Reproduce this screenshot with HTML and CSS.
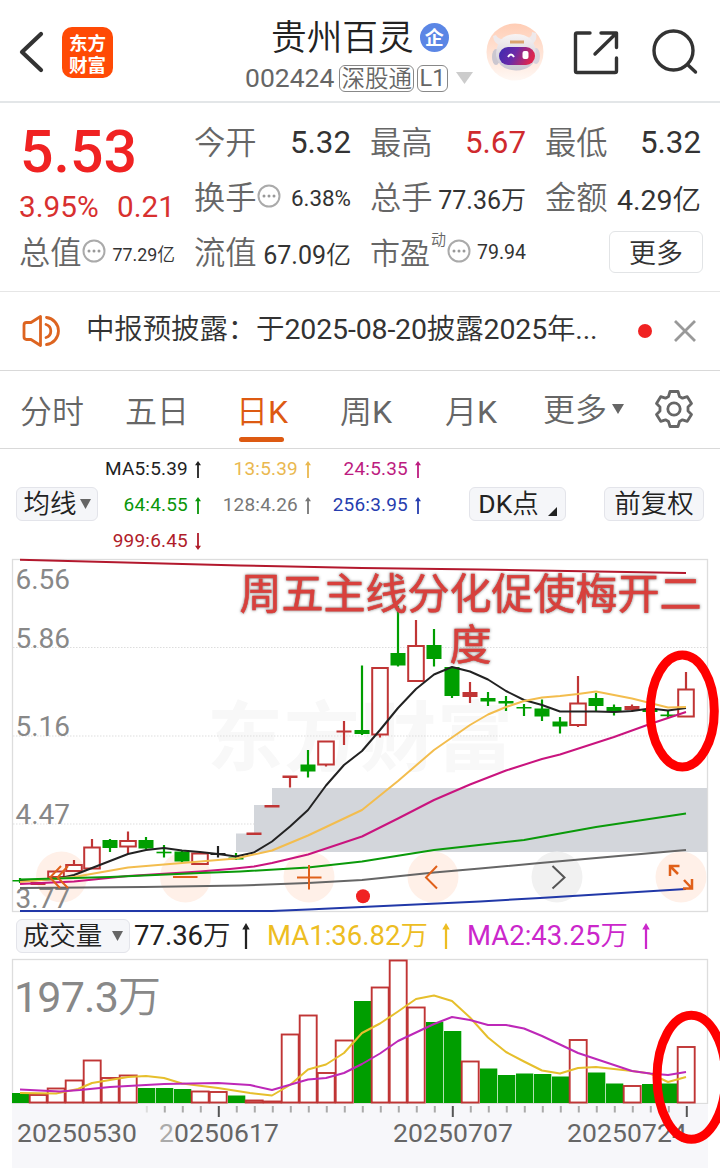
FILE: index.html
```
<!DOCTYPE html>
<html lang="zh-CN">
<head>
<meta charset="utf-8">
<title>贵州百灵 002424</title>
<link rel="stylesheet" href="styles.css">
</head>
<body>
<header class="header">
  <svg class="back" width="26" height="42" viewBox="0 0 26 42"><path d="M23 3 4 21 23 39" fill="none" stroke="#333" stroke-width="4.2" stroke-linecap="round" stroke-linejoin="round"/></svg>
  <div class="logo"><span>东方</span><span>财富</span></div>
  <div class="stock">
    <div class="name"><span>贵州百灵</span><b class="corp">企</b></div>
    <div class="code"><span>002424</span><i class="tag tag-market">深股通</i><i class="tag tag-level">L1</i><svg class="drop" width="17" height="12"><path d="M0 0H17L8.5 12Z" fill="#ccc"/></svg></div>
  </div>
  <svg class="robot" width="58" height="58" viewBox="0 0 58 58">
    <defs>
      <linearGradient id="halo" x2="0" y2="1"><stop stop-color="#ffcdb5"/><stop offset="1" stop-color="#fff8f4"/></linearGradient>
      <linearGradient id="visor" x2="1" y2=".25"><stop stop-color="#3b2bb0"/><stop offset=".5" stop-color="#6b2aa8"/><stop offset="1" stop-color="#dc2650"/></linearGradient>
      <linearGradient id="shell" x2="0" y2="1"><stop stop-color="#f8f4f4"/><stop offset="1" stop-color="#c9c6d2"/></linearGradient>
    </defs>
    <circle cx="29" cy="29" r="28.5" fill="url(#halo)"/>
    <path d="M7 13Q8 21 14 22L20 16Q12 17 10 12ZM50 10Q52 18 45 22L37 14Q46 17 46 9Z" fill="#eee9eb"/>
    <ellipse cx="10" cy="34" rx="4" ry="8" fill="#cbc7d0"/><ellipse cx="50" cy="33" rx="4" ry="8" fill="#d8d3dc"/>
    <path d="M10 33Q10 12 29 11Q50 11 50 32Q48 47 30 47.500Q13 47 10 33Z" fill="url(#shell)"/>
    <path d="M24 19H38" stroke="#dba46f" stroke-width="3"/>
    <rect x="13" y="24" width="36" height="18" rx="9" fill="url(#visor)"/>
    <path d="M22 34q3-5 6 0" fill="none" stroke="#fff" stroke-width="2"/><rect x="36.500" y="28" width="6" height="8" rx="2" fill="#fff"/>
  </svg>
  <svg class="share" width="46" height="46" viewBox="0 0 46 46" fill="none" stroke="#333" stroke-width="3.400" stroke-linecap="round" stroke-linejoin="round"><path d="M17 3H4Q2.500 3 2.500 4.500V41Q2.500 42.500 4 42.500H42Q43.500 42.500 43.500 41V28M28 3H43.500V17.500M43 3.500 22 24"/></svg>
  <svg class="search" width="46" height="46" viewBox="0 0 46 46" fill="none" stroke="#333" stroke-width="3.400" stroke-linecap="round"><circle cx="21.500" cy="21.500" r="19.500"/><path d="M35.500 35.500 43.500 43"/></svg>
</header>

<section class="quote">
  <div class="price">5.53</div>
  <div class="cell"><em>今开</em><span>5.32</span></div>
  <div class="cell"><em>最高</em><span class="up">5.67</span></div>
  <div class="cell"><em>最低</em><span>5.32</span></div>
  <div class="cell change"><span>3.95%</span><span>0.21</span></div>
  <div class="cell"><em>换手</em><svg class="info" width="24" height="24"><use href="#info"/></svg><span class="s22">6.38%</span></div>
  <div class="cell"><em>总手</em><span class="s25">77.36万</span></div>
  <div class="cell"><em>金额</em><span class="s28">4.29亿</span></div>
  <div class="cell"><em>总值</em><svg class="info" width="24" height="24"><use href="#info"/></svg><span class="s18">77.29亿</span></div>
  <div class="cell"><em>流值</em><span class="s25">67.09亿</span></div>
  <div class="cell"><em class="pe">市盈</em><sup>动</sup><svg class="info" width="24" height="24"><use href="#info"/></svg><span class="s19">79.94</span></div>
  <div class="cell more-cell"><button class="more">更多</button></div>
</section>

<section class="notice">
  <svg width="40" height="36" viewBox="0 0 40 36" fill="none" stroke="#dd6420" stroke-width="2.800" stroke-linejoin="round" stroke-linecap="round"><path d="M2 12Q2 9.500 4.500 9.500H9L18.500 3.500V32.500L9 26.500H4.500Q2 26.500 2 24Z"/><path d="M24 11.500A6.800 6.800 0 0 1 24 24.500M24.500 4.500A13.600 13.600 0 0 1 24.500 31.500"/></svg>
  <p>中报预披露：于2025-08-20披露2025年...</p>
  <i class="dot"></i>
  <svg width="24" height="24" viewBox="0 0 24 24"><path d="M2 2 22 22M22 2 2 22" stroke="#999" stroke-width="2.800"/></svg>
</section>

<nav class="tabs">
  <span>分时</span><span>五日</span><span class="active">日K</span><span>周K</span><span>月K</span><span class="tab-more">更多<svg width="12" height="10"><path d="M0 0H12L6 10Z" fill="#666"/></svg></span>
  <svg class="gear" width="40" height="40" viewBox="-20 -20 40 40" fill="none" stroke="#666" stroke-width="2.800" stroke-linejoin="round"><path d="M-4 -17.500H4L5.500 -12.500L8.500 -10.800L13.300 -12.300L17.500 -5.500L14 -2V2L17.500 5.500L13.300 12.300L8.500 10.800L5.500 12.500L4 17.500H-4L-5.500 12.500L-8.500 10.800L-13.300 12.300L-17.500 5.500L-14 2V-2L-17.500 -5.500L-13.300 -12.300L-8.500 -10.800L-5.500 -12.500Z"/><circle r="6.200"/></svg>
</nav>

<section class="averages">
  <button class="pill pill-ma">均线<svg width="11" height="10"><path d="M0 0H11L5.500 10Z" fill="#666"/></svg></button>
  <div class="ma-list">
    <span class="c-black">MA5:5.39<svg><use href="#up"/></svg></span><span class="c-yellow">13:5.39<svg><use href="#up"/></svg></span><span class="c-pink">24:5.35<svg><use href="#up"/></svg></span>
    <span class="c-green">64:4.55<svg><use href="#up"/></svg></span><span class="c-gray">128:4.26<svg><use href="#up"/></svg></span><span class="c-blue">256:3.95<svg><use href="#up"/></svg></span>
    <span class="c-red">999:6.45<svg class="down"><use href="#up"/></svg></span>
  </div>
  <button class="pill pill-dk">DK点<svg width="9" height="9"><path d="M9 0V9H0Z" fill="#222"/></svg></button>
  <button class="pill pill-adj">前复权</button>
</section>

<svg class="chart" id="kline" width="720" height="353" viewBox="0 559 720 353">
  <rect x="12.500" y="559.500" width="695" height="352" fill="#fff" stroke="#ddd" stroke-width="1.300"/>
  <text class="watermark" x="207" y="765" textLength="306">东方财富</text>
  <g stroke="#ddd" stroke-dasharray="1.500 1.500"><path d="M13 647.500H707M13 736H707M13 824H707"/></g>
  <path d="M236 852V833.500H254V805H272V788H707V852Z" fill="#d3d6db"/>
  <g fill="#fff0e8"><circle cx="61.500" cy="877" r="25.500"/><circle cx="185.500" cy="877" r="25.500"/><circle cx="309" cy="877" r="25.500"/><circle cx="433" cy="877" r="25.500"/><circle cx="557" cy="877" r="25.500" fill="#f1f1f1"/><circle cx="681" cy="877" r="25.500"/></g>
  <g class="scale"><text x="15.500" y="588.500">6.56</text><text x="15.500" y="647.500">5.86</text><text x="15.500" y="735.500">5.16</text><text x="15.500" y="823.500">4.47</text><text x="15.500" y="908">3.77</text></g>
  <g id="candles"></g>
  <g class="line">
    <polyline stroke="#222" points="20,881 56,879 74,875 92,868 110,861 128,854 146,850 164,848 182,850.500 200,852 218,854 236,856.500 254,852.500 272,841.500 290,826.500 308,810 326,785.500 344,765 362,751 380,730 398,708 416,689 434,674.500 452,667 470,671.500 488,679.500 506,691 524,700 542,705 560,711.500 596,711.500 614,712 632,711 650,708.500 668,710.500 686,708"/>
    <polyline stroke="#f3bd4e" points="20,882 74,877 128,867.500 182,863 236,858.500 272,850.500 308,835.500 362,810 398,781 434,750 470,725 488,714.500 506,707 524,701 542,697.500 560,696 578,694 596,691.500 614,695 632,698.500 650,703 668,707.500 686,707"/>
    <polyline stroke="#c9147e" points="20,884 74,881.500 128,876 200,871.500 230,869 254,866.500 272,863 308,854.500 362,836.500 398,818.500 434,800 470,784.500 506,770.500 542,759 560,754.500 614,737 650,724 686,712"/>
    <polyline stroke="#0a9a0a" points="20,879.500 110,877 200,873 240,871.500 308,867.500 362,861.500 434,850 470,846 524,840 596,827 686,813.500"/>
    <polyline stroke="#666" points="20,888 144,887 240,885.500 308,883 362,880 434,872.500 480,868.500 540,863 686,850"/>
    <polyline stroke="#2138a8" points="20,911 272,911 308,909.500 362,907 480,901.500 540,898 686,889"/>
    <polyline stroke="#b3182d" points="20,559.800 240,565.500 362,568 480,569.500 686,573"/>
  </g>
  <g fill="none" stroke="#e0601a" stroke-width="2"><path d="M61 866 50 877.500 60 888M68 866 57.500 877.500 68 888M173 877H197.500M297 877.500H321.500M309 865V889.500M437 866 426 877.500 437 888.500"/><path d="M552.500 866 564.500 877.500 552.500 888.500" stroke="#555"/><path d="M670 876V866H679.500M670 866 678 874M692 879V888.500H683M692 888.500 684 880" stroke-width="2.500"/></g>
  <circle cx="363" cy="896.300" r="7" fill="#f02222"/>
</svg>

<section class="volume-bar">
  <button class="pill pill-vol">成交量<svg width="11" height="10"><path d="M0 0H11L5.500 10Z" fill="#666"/></svg></button>
  <span class="c-black vol">77.36万</span><svg class="arrow c-black"><use href="#up"/></svg>
  <span class="c-gold vol ma">MA1:36.82万</span><svg class="arrow c-gold"><use href="#up"/></svg>
  <span class="c-violet vol ma">MA2:43.25万</span><svg class="arrow c-violet"><use href="#up"/></svg>
</section>

<svg class="chart" id="volume" width="720" height="209" viewBox="0 959 720 209">
  <rect x="12.500" y="959.500" width="695" height="144" fill="#fff" stroke="#ddd" stroke-width="1.300"/>
  <rect x="12" y="1104" width="696" height="64" fill="#f7f7fa"/>
  <text class="peak" x="14" y="1012" textLength="147">197.3万</text>
  <g id="bars"></g>
  <g class="line">
    <polyline stroke="#e6bf2c" points="20,1093 56,1093.500 78,1089 92,1083 110,1080 128,1077 146,1076 164,1078 182,1083.500 218,1088 250,1093 272,1095.500 290,1085 308,1069.500 326,1064.500 344,1053 362,1033 380,1023.500 398,1011.500 416,999 434,995.500 452,1001 470,1017.500 488,1037.500 506,1052 524,1061.500 542,1070.500 560,1073.500 578,1068 596,1067 632,1071 650,1073.500 668,1082 686,1077"/>
    <polyline stroke="#bd28b8" points="20,1089.500 60,1091.500 80,1090 110,1087 164,1084 218,1083 250,1085 272,1090 308,1079.500 326,1078 344,1073 362,1064 380,1053.500 398,1041 416,1032.500 434,1024 452,1017 470,1020 488,1025 506,1025 524,1028.500 542,1036 560,1044.500 578,1053 632,1071 650,1073.500 668,1075 686,1072"/>
  </g>
  <g id="ticks"></g>
  <g class="dates"><text x="17" y="1141.500" textLength="120">20250530</text><text x="159" y="1141.500" textLength="120"><tspan fill="#aaa">2</tspan>0250617</text><text x="393" y="1141.500" textLength="120">20250707</text><text x="567" y="1141.500" textLength="120">20250724</text></g>
</svg>

<svg class="notes" width="720" height="1168">
  <g class="headline"><text x="239.500" y="609" textLength="462">周五主线分化促使梅开二</text><text x="449.500" y="660">度</text></g>
  <g fill="none" stroke="red" stroke-width="9"><ellipse cx="682.300" cy="711" rx="32" ry="56"/><ellipse cx="691.300" cy="1077.300" rx="34.300" ry="62"/></g>
</svg>

<svg class="defs" width="0" height="0"><defs>
  <g id="info" fill="none" stroke="#aaa"><circle cx="12" cy="12" r="10.500" stroke-width="2"/><g fill="#999" stroke="none"><circle cx="7" cy="12" r="1.500"/><circle cx="12" cy="12" r="1.500"/><circle cx="17" cy="12" r="1.500"/></g></g>
  <symbol id="up" viewBox="0 0 8 18" preserveAspectRatio="none"><path d="M4 0 7 4.500H4.900V18H3.100V4.500H1Z" fill="currentColor"/></symbol>
</defs></svg>
<script src="chart.js"></script>
</body>
</html>
```
FILE: styles.css
```
* { box-sizing: border-box; }
body { margin: 0; width: 720px; height: 1168px; overflow: hidden; position: relative; background: #fff; color: #333; font-family: Roboto, "Noto Sans CJK SC DemiLight", "Noto Sans CJK SC", sans-serif; font-weight: 400; }
svg { display: block; flex: none; }
em, i { font-style: normal; }
button { font: inherit; color: inherit; margin: 0; padding: 0; }

.header { height: 103px; border-bottom: 2px solid #e3e6e8; display: flex; align-items: flex-start; }
.back { margin: 31px 0 0 18px; }
.logo { margin: 27px 0 0 18px; width: 51px; height: 51px; border-radius: 10px; background: #ff4a05; color: #fff; font-family: "Noto Sans CJK SC", sans-serif; font-weight: 700; font-size: 18.500px; line-height: 22px; display: flex; flex-direction: column; align-items: center; justify-content: center; }
.stock { width: 228px; margin-left: 132px; }
.name { margin-top: 11px; height: 52px; padding-left: 26px; display: flex; align-items: center; font-family: "Noto Sans CJK SC", sans-serif; font-weight: 350; font-size: 35.700px; line-height: 48px; color: #222; white-space: nowrap; }
.name span { margin-top: -5px; }
.corp { width: 29px; height: 29px; margin-left: 6px; border-radius: 50%; background: #5b86e5; color: #fff; font-size: 19px; line-height: 28px; text-align: center; font-weight: 700; }
.code { height: 30px; display: flex; align-items: center; font-size: 26.500px; color: #666; white-space: nowrap; }
.code > span { margin-top: -2px; }
.tag { height: 27px; border: 1.500px solid #888; border-radius: 6px; font-size: 23.500px; line-height: 23px; text-align: center; }
.tag-market { width: 75px; margin-left: 5px; font-family: "Noto Sans CJK SC", sans-serif; font-weight: 350; }
.tag-level { width: 31px; margin-left: 3px; line-height: 25px; }
.drop { margin-left: 8px; }
.robot { margin: 23px 0 0 13px; }
.share { margin: 30px 0 0 29px; }
.search { margin: 29px 0 0 33px; }

.quote { height: 189px; border-bottom: 1px solid #e6e6e6; padding: 12px 18px 0 19px; display: grid; grid-template-columns: 156px 157px 156px 156px; column-gap: 19px; grid-template-rows: repeat(3, 55px); }
.cell { display: flex; align-items: center; justify-content: space-between; font-size: 31.300px; white-space: nowrap; }
.cell em { color: #666; font-family: "Noto Sans CJK SC", sans-serif; font-weight: 350; margin-top: -4px; }
.price { color: #f02222; font-size: 59px; line-height: 73px; font-weight: 500; padding-left: 1px; }
.up { color: #cf2a2e; }
.change { color: #d8302f; font-size: 29.700px; padding-top: 18px; }
.s28 { font-size: 28.500px; } .s25 { font-size: 25px; } .s22 { font-size: 22.400px; } .s19 { font-size: 19.500px; } .s18 { font-size: 17.800px; }
.cell .info { margin: -4px auto 0 0; }
.cell sup { font-size: 15px; color: #666; align-self: flex-start; line-height: 20px; margin: 5px 0 0 1px; }
.cell .pe { font-size: 30px; }
.cell sup + .info { margin-left: 1px; }
.more-cell { justify-content: flex-end; }
.more { width: 94px; height: 42px; margin: -1px -2px 0 0; border: 1.500px solid #e2e4e6; border-radius: 6px; background: #fff; font-family: "Noto Sans CJK SC", sans-serif; font-size: 27px; line-height: 38px; font-weight: 350; }

.notice { height: 79px; border-bottom: 1px solid #d9d9d9; display: flex; align-items: center; padding-left: 22px; }
.notice p { margin: -2px 0 0 24px; width: 552px; font-size: 28.500px; line-height: 40px; white-space: nowrap; letter-spacing: -.15px; }
.dot { width: 14px; height: 14px; border-radius: 50%; background: #f02222; margin-right: 21px; }

.tabs { height: 78px; border-bottom: 1px solid #d9d9d9; display: flex; padding-left: 20px; font-size: 32px; line-height: 82px; color: #666; white-space: nowrap; }
.tabs span { width: 105px; }
.tabs span:nth-child(2) { width: 111px; }
.tabs span:nth-child(3) { width: 104px; }
.tabs .active { color: #dd5a12; display: flex; flex-direction: column; }
.active::after { content: ""; width: 45px; height: 5px; border-radius: 3px; background: #dd5a12; margin: -16px 0 0 3px; }
.tabs .tab-more { width: 111px; display: flex; align-items: center; margin-left: -7px; }
.tab-more svg { margin: -2px 0 0 5px; }
.gear { margin-top: 18px; }

.averages { height: 110px; display: flex; align-items: center; }
.pill { height: 34px; border: 1.500px solid #e3e4ea; border-radius: 6px; background: #f5f6f9; display: flex; align-items: center; justify-content: center; font-size: 26.500px; line-height: 32px; color: #222; white-space: nowrap; }
.pill-ma { width: 82px; margin-left: 16px; gap: 3px; }
.ma-list { width: 324px; padding-top: 2px; display: grid; grid-template-columns: 104px 110px 110px; grid-auto-rows: 36px; font-size: 19px; letter-spacing: .2px; line-height: 36px; }
.ma-list span { display: flex; align-items: center; justify-content: flex-end; gap: 6px; white-space: nowrap; }
.ma-list svg { width: 8px; height: 17px; }
.ma-list .down { transform: rotate(180deg); }
.pill-dk { width: 97px; margin-left: 47px; gap: 9px; }
.pill-dk svg { align-self: flex-end; margin-bottom: 4px; }
.pill-adj { width: 100px; margin-left: 38px; }
.c-black { color: #222; } .c-yellow { color: #eab84f; } .c-pink { color: #bd1c80; } .c-green { color: #0a960a; } .c-gray { color: #777; } .c-blue { color: #263daf; } .c-red { color: #b01c2a; } .c-gold { color: #edbd22; } .c-violet { color: #cb27cb; }

.chart { overflow: visible; }
.scale { font-size: 28px; fill: #888; }
.watermark { font-family: "Noto Sans CJK SC", sans-serif; font-size: 76px; font-weight: 700; fill: #f8f8f8; }
.peak { font-size: 43px; fill: #888; }
.dates { font-size: 26.500px; fill: #666; }
.line { fill: none; stroke-width: 2; stroke-linejoin: round; }
.headline { font-family: "Noto Sans CJK SC", sans-serif; font-size: 42px; font-weight: 400; fill: #d8403c; stroke: #d8403c; stroke-width: .6px; filter: drop-shadow(0 0 1.500px #777); }
.notes { position: absolute; left: 0; top: 0; pointer-events: none; }
.defs { position: absolute; }

.volume-bar { height: 47px; display: flex; align-items: center; }
.pill-vol { width: 114px; margin-left: 16px; gap: 10px; }
.vol { width: 98px; font-size: 27.500px; line-height: 40px; margin-left: 4px; white-space: nowrap; }
.arrow { width: 10px; height: 26px; margin-left: 9px; }
.ma { width: 162px; margin-left: 16px; }
.ma + .arrow { margin-left: 12px; }
```
FILE: chart.js
```
const NS = "http://www.w3.org/2000/svg";
const RED = "#c03535", GREEN = "#009e00";
function add(parent, tag, attrs) {
  const el = document.createElementNS(NS, tag);
  for (const k in attrs) el.setAttribute(k, attrs[k]);
  document.getElementById(parent).appendChild(el);
}
const x = i => 20 + 18 * i;

// kind, body top, body bottom, wick top, wick bottom; r hollow red, R solid red, g green, k black
const candles = [
  ["g",880,881.5,878,883],["R",882,885,882,885],["r",871.5,877,871,877],["r",865,871,860,871],["r",847.5,868.5,839,868],
  ["g",840,848,839,852],["r",841,846.5,831.5,854],["g",840,848.5,837,849],["g",851.7,853.3,845,857.5],["g",851.5,861.5,851,863],
  ["r",853.5,864,853,864],["k",853,855,846,857.5],["g",857.5,859.5,853,860],["R",832.5,835,833,834],["R",805,807.5,806,807],
  ["R",775.5,778,776,787.5],["g",764.5,771.5,750,777.5],["r",741.5,764.5,741,766.5],["R",730.5,732.5,721,745],["g",730,734,665.5,735],
  ["r",668,734.5,668,737.5],["g",653,665.5,606,666.5],["r",646,681,620,681],["g",645,659,629,666.5],["g",667,696,667,698],
  ["R",692,697,682,703],["g",698,701.5,692,706],["g",701,703.5,696,711],["g",707,708.5,704,716],["g",708.5,716.5,699.5,721],
  ["g",721.5,726.5,717,733.5],["r",703.5,725,676,727],["g",698,706,693,711],["g",707,712,704.5,715.5],["R",706,710,704.5,712],
  ["g",709,712,707,712],["g",714.5,716.2,710,718],["r",689.5,716.5,672,717]
];
candles.forEach(([kind, top, bottom, high, low], i) => {
  const color = kind === "g" ? GREEN : kind === "k" ? "#222" : RED;
  add("candles", "path", { d: `M${x(i)} ${high}V${low}`, stroke: color, "stroke-width": 2.2 });
  const hollow = kind === "r";
  const half = hollow ? 7.8 : 7.5;
  add("candles", "rect", { x: x(i) - half, y: top, width: half * 2, height: bottom - top, fill: hollow ? "#fff" : color, stroke: hollow ? color : "none", "stroke-width": 2 });
});

const volumes = "g1093 r1095 r1088.5 r1080.5 r1060.5 r1078 r1075.500 g1088 g1088 g1089 r1091.5 r1092 g1095.5 r1100.500 r1101.5 r1034.5 r1015.5 r1073 r1040.5 g1001 r987.5 r960.5 r1007.5 g1022 g1031 r1061.5 g1068.5 g1075 g1073.5 g1074 g1076.5 r1040 g1072.5 g1083.5 r1086 g1084 g1083.5 r1047".split(" ");
volumes.forEach((v, i) => {
  const top = +v.slice(1), red = v[0] === "r";
  add("bars", "rect", red
    ? { x: x(i) - 8.3, y: top, width: 17, height: 1102.5 - top, fill: "#fff", stroke: RED, "stroke-width": 1.9 }
    : { x: x(i) - 8, y: top, width: 17.3, height: 1103 - top, fill: GREEN });
});

for (let i = 7; i < 38; i++) {
  const major = (i - 11) % 13 === 0;
  add("ticks", "path", { d: `M${x(i) + 0.8} 1106V${major ? 1117 : 1112.5}`, stroke: major ? "#555" : i === 7 ? "#ddd" : "#aaa", "stroke-width": 2 });
}
```
